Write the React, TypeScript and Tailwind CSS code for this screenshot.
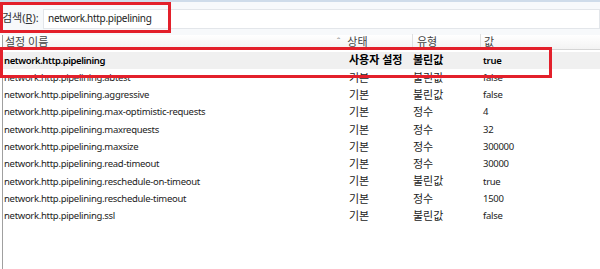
import React from 'react';

const rows = [
  { name: 'network.http.pipelining', status: '사용자 설정', type: '불린값', value: 'true', bold: true },
  { name: 'network.http.pipelining.abtest', status: '기본', type: '불린값', value: 'false' },
  { name: 'network.http.pipelining.aggressive', status: '기본', type: '불린값', value: 'false' },
  { name: 'network.http.pipelining.max-optimistic-requests', status: '기본', type: '정수', value: '4' },
  { name: 'network.http.pipelining.maxrequests', status: '기본', type: '정수', value: '32' },
  { name: 'network.http.pipelining.maxsize', status: '기본', type: '정수', value: '300000' },
  { name: 'network.http.pipelining.read-timeout', status: '기본', type: '정수', value: '30000' },
  { name: 'network.http.pipelining.reschedule-on-timeout', status: '기본', type: '불린값', value: 'true' },
  { name: 'network.http.pipelining.reschedule-timeout', status: '기본', type: '정수', value: '1500' },
  { name: 'network.http.pipelining.ssl', status: '기본', type: '불린값', value: 'false' },
];

export default function App() {
  return (
    <div
      className="relative w-[600px] h-[269px] overflow-hidden bg-white text-[11px] text-[#222]"
      style={{ fontFamily: '"Noto Sans", "Noto Sans CJK KR", sans-serif' }}
    >
      {/* Search bar */}
      <div className="h-[35px] border-t-[2px] border-[#cfdcea] bg-[#f7f9fb] flex items-center pl-[2px]">
        <span className="w-[41px] text-[#333]">
          검색(<span className="underline">R</span>):
        </span>
        <div className="flex-1 h-[20px] bg-white border border-[#e3e6ea] flex items-center pl-[4px] text-[10px] tracking-[-0.3px]">
          network.http.pipelining
        </div>
      </div>

      {/* Table */}
      <div className="border-l border-[#a0a0a0] ml-[2px] h-full">
        <div className="flex h-[15px] items-center bg-gradient-to-b from-white to-[#f3f3f3] border-b border-[#d5d5d5] text-[#444]">
          <div className="w-[334px] pl-[2px]">설정 이름</div>
          <div className="w-[76px] border-r border-[#e0e0e0] flex items-center">
            <span className="text-[8px] text-[#999] mr-[7px] scale-x-125">ˆ</span>상태
          </div>
          <div className="w-[68px] pl-[4px] border-r border-[#e0e0e0]">유형</div>
          <div className="flex-1 pl-[3px]">값</div>
        </div>
        <div className="pt-[2px]">
          {rows.map((r) => (
            <div
              key={r.name}
              className={`flex h-[17.3px] items-center ${r.bold ? 'bg-[#f0f0f0] text-black' : ''}`}
            >
              <div
                className={`w-[346px] pl-[1px] whitespace-nowrap text-[9.5px] ${r.bold ? 'font-semibold tracking-[-0.4px]' : 'tracking-[-0.3px]'}`}
              >
                {r.name}
              </div>
              <div className={`w-[64px] ${r.bold ? 'font-bold' : ''}`}>{r.status}</div>
              <div className={`w-[70px] ${r.bold ? 'font-bold' : ''}`}>{r.type}</div>
              <div className={`flex-1 text-[9.5px] tracking-[-0.3px] ${r.bold ? 'font-semibold' : ''}`}>{r.value}</div>
            </div>
          ))}
        </div>
      </div>

      {/* Red highlight boxes */}
      <div className="absolute left-0 top-[2px] w-[171px] h-[31px] border-[3px] border-[#e3202b]" />
      <div className="absolute left-0 top-[47px] w-[552px] h-[31px] border-[3px] border-[#e3202b]" />
    </div>
  );
}
